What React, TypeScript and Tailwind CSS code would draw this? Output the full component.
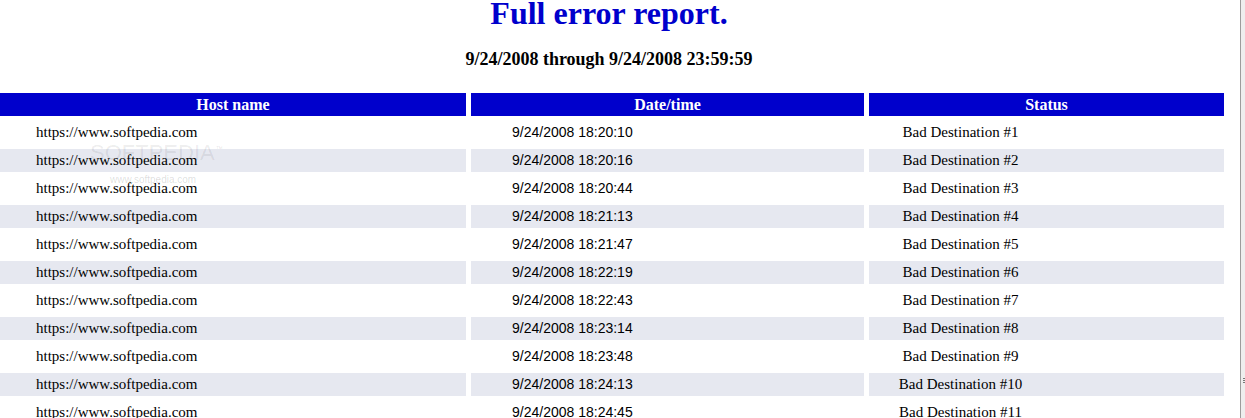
import React from "react";

const rows: [string, string][] = [
  ["18:20:10", "#1"],
  ["18:20:16", "#2"],
  ["18:20:44", "#3"],
  ["18:21:13", "#4"],
  ["18:21:47", "#5"],
  ["18:22:19", "#6"],
  ["18:22:43", "#7"],
  ["18:23:14", "#8"],
  ["18:23:48", "#9"],
  ["18:24:13", "#10"],
  ["18:24:45", "#11"],
  ["18:25:02", "#12"],
];

export default function App() {
  return (
    <div className="flex h-[418px] w-[1245px] overflow-hidden bg-white">
      <div className="relative w-[1240px] shrink-0 font-['Liberation_Serif','Times_New_Roman',serif] text-black">
        <h1 className="w-[1218px] text-center text-[32px] font-bold leading-[26px] text-[#0000cc]">
          Full error report.
        </h1>
        <h3 className="mt-[22px] w-[1218px] text-center text-[18px] font-bold leading-[22px]">
          9/24/2008 through 9/24/2008 23:59:59
        </h3>
        <div className="mt-[23px] grid w-[1224px] grid-cols-[466px_393px_355px] gap-[5px]">
          <div className="h-[23px] bg-[#0000cc] text-center text-[16px] font-bold leading-[23px] text-white">
            Host name
          </div>
          <div className="h-[23px] bg-[#0000cc] text-center text-[16px] font-bold leading-[23px] text-white">
            Date/time
          </div>
          <div className="h-[23px] bg-[#0000cc] text-center text-[16px] font-bold leading-[23px] text-white">
            Status
          </div>
          {rows.map(([t, n], i) => {
            const bg = i % 2 === 1 ? "bg-[#e6e8f0]" : "bg-white";
            return (
              <React.Fragment key={i}>
                <div className={`h-[23px] pl-[36px] text-[15px] leading-[23px] ${bg}`}>
                  https://www.softpedia.com
                </div>
                <div
                  className={`h-[23px] pl-[41px] font-['Liberation_Sans',Arial,sans-serif] text-[14px] leading-[23px] ${bg}`}
                >
                  9/24/2008 {t}
                </div>
                <div className={`h-[23px] pr-[172px] text-center text-[15px] leading-[23px] ${bg}`}>
                  Bad Destination {n}
                </div>
              </React.Fragment>
            );
          })}
        </div>
        <div className="pointer-events-none absolute left-[90px] top-[142px] select-none font-['Liberation_Sans',Arial,sans-serif]">
          <div className="flex items-start">
            <span className="text-[22px] leading-[22px] text-black/[0.08]">SOFTPEDIA</span>
            <span className="ml-[1px] mt-[3px] text-[7px] leading-[7px] text-black/[0.12]">™</span>
          </div>
          <div className="ml-[20px] mt-[11px] text-[10px] leading-[10px] text-black/[0.14]">
            www.softpedia.com
          </div>
        </div>
      </div>
      <div className="w-[1px] shrink-0 bg-[#9c9c9c]" />
      <div className="relative w-[4px] shrink-0 bg-[#eeeeee]">
        <div className="absolute left-[2px] top-[378px] h-[1px] w-[2px] bg-[#777]" />
        <div className="absolute left-[2px] top-[380px] h-[1px] w-[2px] bg-[#777]" />
        <div className="absolute left-[2px] top-[382px] h-[1px] w-[2px] bg-[#777]" />
      </div>
    </div>
  );
}
